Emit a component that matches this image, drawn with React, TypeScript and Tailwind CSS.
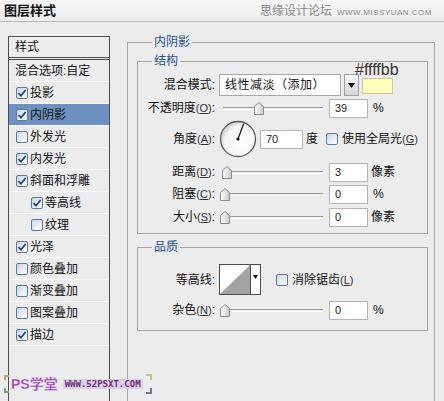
import React from 'react';

/** 左侧样式列表 */
const STYLE_ITEMS: { label: string; checked: boolean; active?: boolean; sub?: boolean }[] = [
  { label: '投影', checked: true },
  { label: '内阴影', checked: true, active: true },
  { label: '外发光', checked: false },
  { label: '内发光', checked: true },
  { label: '斜面和浮雕', checked: true },
  { label: '等高线', checked: true, sub: true },
  { label: '纹理', checked: false, sub: true },
  { label: '光泽', checked: true },
  { label: '颜色叠加', checked: false },
  { label: '渐变叠加', checked: false },
  { label: '图案叠加', checked: false },
  { label: '描边', checked: true },
];

function CheckBox({ checked }: { checked: boolean }) {
  return (
    <span className="flex h-[12px] w-[12px] shrink-0 items-center justify-center rounded-[2px] border border-[#5a7ba3] bg-gradient-to-br from-[#c9d6e6] to-[#ffffff]">
      {checked && (
        <svg width="10" height="10" viewBox="0 0 10 10">
          <path d="M1.5 5.2 L4 7.8 L8.6 2" fill="none" stroke="#21407a" strokeWidth="1.7" />
        </svg>
      )}
    </span>
  );
}

/** 带下划线快捷键的标签 */
function Label({ text, hot }: { text: string; hot?: string }) {
  return (
    <span className="w-[77px] shrink-0 text-right whitespace-nowrap">
      {text}
      {hot && (
        <span className="text-[11px] text-[#333]">
          (<u>{hot}</u>)
        </span>
      )}
      :
    </span>
  );
}

function Slider({ thumb }: { thumb: number }) {
  return (
    <div className="relative h-[14px] w-[104px] shrink-0">
      <div className="absolute left-[4px] right-0 top-[6px] h-[3px] border-t border-b border-t-[#9b9b9b] border-b-white" />
      <svg className="absolute top-[1px]" style={{ left: thumb }} width="10" height="13" viewBox="0 0 10 13">
        <defs>
          <linearGradient id="thumbg" x1="0" y1="0" x2="1" y2="0">
            <stop offset="0" stopColor="#ffffff" />
            <stop offset="1" stopColor="#c8c8c8" />
          </linearGradient>
        </defs>
        <polygon points="0.5,4.5 5,0.5 9.5,4.5 9.5,12.5 0.5,12.5" fill="url(#thumbg)" stroke="#8d8d8d" />
      </svg>
    </div>
  );
}

function NumBox({ value, w = 'w-[39px]' }: { value: string; w?: string }) {
  return (
    <div className={`${w} h-[19px] shrink-0 border border-[#b4b4b4] bg-white pl-[5px] text-[11px] leading-[17px] text-[#222]`}>
      {value}
    </div>
  );
}

function Dial() {
  return (
    <svg width="38" height="38" viewBox="0 0 38 38" className="shrink-0">
      <defs>
        <radialGradient id="dialg" cx="0.6" cy="0.6" r="0.6">
          <stop offset="0" stopColor="#ffffff" />
          <stop offset="0.8" stopColor="#f4f4f4" />
          <stop offset="1" stopColor="#cfcfcf" />
        </radialGradient>
      </defs>
      <circle cx="19" cy="19" r="17.5" fill="url(#dialg)" stroke="#5d5d5d" strokeWidth="1.3" />
      <line x1="19" y1="19" x2="24.6" y2="3.8" stroke="#111" strokeWidth="1.2" />
      <circle cx="19" cy="19" r="1.6" fill="#111" />
    </svg>
  );
}

export default function App() {
  return (
    <div className="relative h-[401px] w-[444px] overflow-hidden bg-[#ececec] font-['Liberation_Sans','Noto_Sans_CJK_SC',sans-serif] text-[12px] leading-[16px] text-[#111]">
      {/* 标题栏 */}
      <div className="flex h-[22px] items-end justify-between border-b border-[#b8b8b8] bg-gradient-to-b from-[#f7f7f7] to-[#ececec] pl-[4px] pr-[12px] pb-[3px]">
        <span className="text-[13px] font-bold leading-[14px]">图层样式</span>
        <span className="flex items-end gap-[5px] text-[#8a8a8a]">
          <span className="text-[12px] leading-[13px]">思缘设计论坛</span>
          <span className="text-[8px] leading-[10px] tracking-[0.5px]">WWW.MISSYUAN.COM</span>
        </span>
      </div>

      <div className="flex">
        {/* 左侧列表 */}
        <div className="ml-[8px] mt-[14px] h-[380px] w-[102px] shrink-0 border border-[#4d4d4d] bg-[#ececec]">
          <div className="flex h-[23px] items-center border-b-[3px] border-double border-[#4d4d4d] pl-[6px]">样式</div>
          <div className="flex h-[22px] items-center border-b border-[#fafafa] pl-[6px]">混合选项:自定</div>
          {STYLE_ITEMS.map(item => (
            <div
              key={item.label}
              className={`flex h-[22px] items-center gap-[2px] border-b border-[#fafafa] ${item.sub ? 'pl-[22px]' : 'pl-[7px]'} ${
                item.active ? 'bg-[#6d91c1]' : ''
              }`}
            >
              <CheckBox checked={item.checked} />
              <span>{item.label}</span>
            </div>
          ))}
        </div>

        {/* 右侧设置 */}
        <fieldset className="ml-[17px] mt-[12px] h-[400px] w-[308px] shrink-0 border border-[#a6a6a6] px-[9px] pr-[6px]">
          <legend className="ml-[15px] px-[2px] text-[#1d4f95]">内阴影</legend>

          <fieldset className="mt-[3px] border border-[#a6a6a6] pb-[6px]">
            <legend className="ml-[14px] px-[2px] text-[#1d4f95]">结构</legend>

            <div className="mt-[5px] flex h-[22px] items-center">
              <Label text="混合模式" />
              <div className="ml-[4px] flex h-[22px] w-[122px] items-center border border-[#a9a9a9] bg-white pl-[5px] tracking-[0.5px]">
                线性减淡（添加）
              </div>
              <div className="ml-[3px] flex h-[22px] w-[15px] items-center justify-center border border-[#a0a0a0] bg-gradient-to-b from-[#fbfbfb] to-[#d6d6d6]">
                <svg width="7" height="5" viewBox="0 0 7 5">
                  <polygon points="0,0 7,0 3.5,5" fill="#111" />
                </svg>
              </div>
              <div className="relative ml-[3px] mt-[4px] h-[16px] w-[31px] self-start border border-[#c8c8a0] bg-[#ffffbb]">
                <span className="absolute left-[-8px] top-[-17px] font-['Liberation_Sans',sans-serif] text-[16px] leading-[16px] text-[#333]">
                  #ffffbb
                </span>
              </div>
            </div>

            <div className="mt-[2px] flex h-[20px] items-center">
              <Label text="不透明度" hot="O" />
              <span className="ml-[4px]" />
              <Slider thumb={35} />
              <span className="ml-[6px]" />
              <NumBox value="39" />
              <span className="ml-[5px]">%</span>
            </div>

            <div className="mt-[2px] flex h-[38px] items-center">
              <Label text="角度" hot="A" />
              <span className="ml-[4px]" />
              <Dial />
              <span className="ml-[3px]" />
              <NumBox value="70" w="w-[43px]" />
              <span className="ml-[3px]">度</span>
              <span className="ml-[8px]" />
              <CheckBox checked={false} />
              <span className="ml-[4px] whitespace-nowrap">
                使用全局光<span className="text-[11px] text-[#333]">(<u>G</u>)</span>
              </span>
            </div>

            <div className="mt-[4px] flex h-[20px] items-center">
              <Label text="距离" hot="D" />
              <span className="ml-[4px]" />
              <Slider thumb={3} />
              <span className="ml-[6px]" />
              <NumBox value="3" />
              <span className="ml-[3px]">像素</span>
            </div>

            <div className="mt-[2px] flex h-[20px] items-center">
              <Label text="阻塞" hot="C" />
              <span className="ml-[4px]" />
              <Slider thumb={1} />
              <span className="ml-[6px]" />
              <NumBox value="0" />
              <span className="ml-[5px]">%</span>
            </div>

            <div className="mt-[3px] flex h-[20px] items-center">
              <Label text="大小" hot="S" />
              <span className="ml-[4px]" />
              <Slider thumb={1} />
              <span className="ml-[6px]" />
              <NumBox value="0" />
              <span className="ml-[3px]">像素</span>
            </div>
          </fieldset>

          <fieldset className="mt-[5px] border border-[#a6a6a6] pb-[10px]">
            <legend className="ml-[14px] px-[2px] text-[#1d4f95]">品质</legend>

            <div className="mt-[9px] flex h-[31px] items-center">
              <Label text="等高线" />
              <div className="ml-[4px] flex h-[31px] w-[42px] border border-[#4d4d4d] bg-white">
                <svg width="30" height="29" viewBox="0 0 30 29" className="shrink-0">
                  <polygon points="0,29 30,0 30,29" fill="#a3a3a3" />
                </svg>
                <div className="flex flex-1 items-start justify-center border-l border-[#4d4d4d] pt-[10px]">
                  <svg width="5" height="4" viewBox="0 0 5 4">
                    <polygon points="0,0 5,0 2.5,4" fill="#111" />
                  </svg>
                </div>
              </div>
              <span className="ml-[15px]" />
              <CheckBox checked={false} />
              <span className="ml-[4px] whitespace-nowrap">
                消除锯齿<span className="text-[11px] text-[#333]">(<u>L</u>)</span>
              </span>
            </div>

            <div className="mt-[5px] flex h-[20px] items-center">
              <Label text="杂色" hot="N" />
              <span className="ml-[4px]" />
              <Slider thumb={1} />
              <span className="ml-[6px]" />
              <NumBox value="0" />
              <span className="ml-[5px]">%</span>
            </div>
          </fieldset>
        </fieldset>
      </div>

      {/* 底部水印 */}
      <div className="absolute left-[4px] top-[374px] flex items-center gap-[2px]">
        <span className="flex flex-col gap-[8px]">
          <span className="h-[5px] w-[5px] border-l-2 border-t-2 border-[#b9a46a]" />
          <span className="h-[5px] w-[5px] border-b-2 border-l-2 border-[#7fa36a]" />
        </span>
        <span className="text-[14px] font-bold leading-[14px] text-[#8d3fa6] [-webkit-text-stroke:0.4px_#e7d3ef]">PS学堂</span>
        <span className="ml-[3px] bg-[#dcd0e4] px-[2px] font-['DejaVu_Sans_Mono',monospace] text-[9px] font-bold leading-[10px] text-[#6b2f86]">
          WWW.52PSXT.COM
        </span>
        <span className="ml-[1px] flex flex-col gap-[8px]">
          <span className="h-[6px] w-[6px] border-r-2 border-t-2 border-[#c8c480]" />
          <span className="h-[6px] w-[6px] border-b-2 border-r-2 border-[#707a8a]" />
        </span>
      </div>
    </div>
  );
}
